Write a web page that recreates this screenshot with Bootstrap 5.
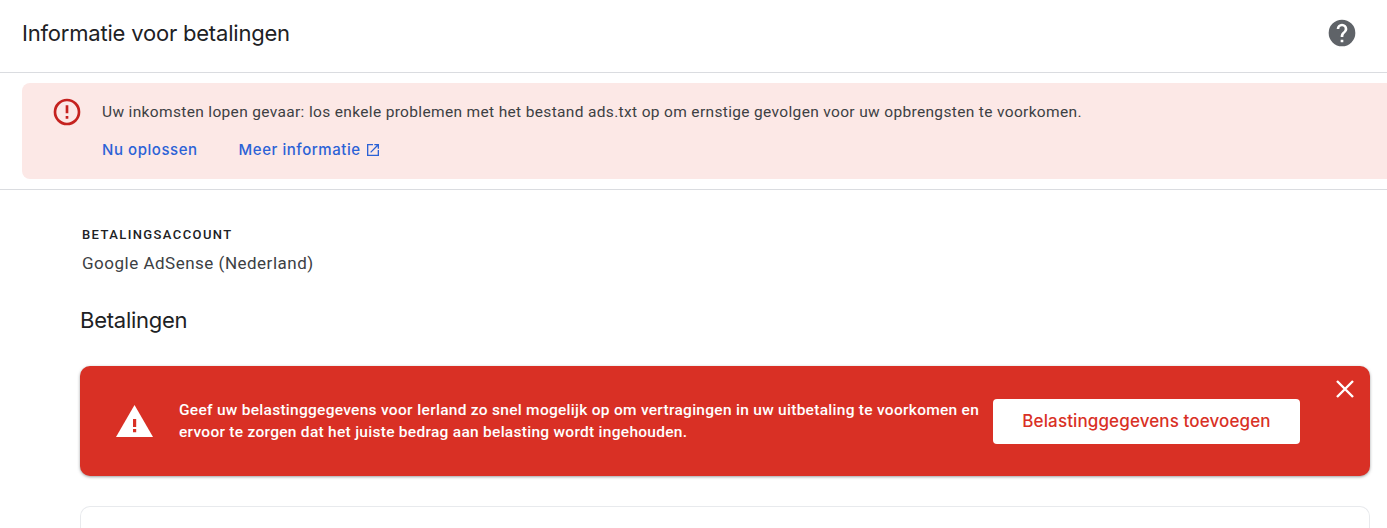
<!DOCTYPE html>
<html lang="nl">
<head>
<meta charset="utf-8">
<title>Informatie voor betalingen</title>
<link href="https://cdn.jsdelivr.net/npm/bootstrap@5.3.0/dist/css/bootstrap.min.css" rel="stylesheet">
<style>
html,body{height:528px;overflow:hidden;background:#fff}
body{font-family:Roboto,"Liberation Sans",sans-serif;color:#3c4043}
.page-head{height:73px;border-bottom:1px solid #dadce0;padding:0 29px 5px 22px}
.page-title{font-family:Inter,"Open Sans",sans-serif;font-size:22px;font-weight:400;color:#202124;margin:0;letter-spacing:-.2px}
.help-icon{margin-bottom:1px}
.warn-wrap{height:117px;padding:10px 0 10px 22px;border-bottom:1px solid #dadce0}
.warn-box{background:#fce8e6;border-radius:8px 0 0 8px;height:96px;padding:17px 0 0 29px}
.warn-icon{margin-top:-4px}
.warn-text{font-size:15.5px;line-height:24px;color:#3c4043;letter-spacing:.34px;margin-left:19px;white-space:nowrap}
.warn-links{margin-left:19px;margin-top:14px;gap:41px}
.warn-link{font-family:Inter,sans-serif;font-size:15px;font-weight:500;color:#2b62d6;text-decoration:none;line-height:24px;letter-spacing:.55px}
.content-area{padding:35px 17px 0 80px}
.acct-label{font-size:13px;font-weight:500;letter-spacing:1.4px;color:#202124;line-height:20px;margin-left:2px}
.acct-name{font-size:17px;line-height:24px;color:#3c4043;margin:6px 0 0 2px;letter-spacing:.5px}
.sect-title{font-family:Inter,sans-serif;font-size:22px;font-weight:400;color:#202124;line-height:28px;margin:0;margin-top:31px;letter-spacing:-.25px}
.tax-banner{background:#d93025;border-radius:10px;height:110px;margin-top:32px;box-shadow:0 1px 3px rgba(60,64,67,.5);padding-left:36px}
.tax-text{font-size:15.5px;font-weight:500;line-height:22px;color:#fff;width:814px;margin-left:26px;letter-spacing:.28px}
.tax-btn{font-family:Inter,sans-serif;background:#fff;color:#d93025;width:307px;height:45px;font-size:17px;font-weight:500;border-radius:4px;border:0;letter-spacing:.12px;padding:2px 0 0}
.tax-btn:hover{background:#fff;color:#d93025}
.tax-close{position:absolute;top:13px;right:15px;background:none;border:0;padding:0;line-height:0}
.lower-card{height:22px;margin-top:30px;border:1px solid #e8eaed;border-bottom:0;border-radius:10px 10px 0 0}
</style>
</head>
<body>
<header class="page-head d-flex align-items-center justify-content-between">
  <h1 class="page-title">Informatie voor betalingen</h1>
  <svg class="help-icon" width="32" height="32" viewBox="0 0 24 24" aria-label="Help"><path fill="#5f6368" d="M12 2a10 10 0 1 0 0 20 10 10 0 0 0 0-20zm1 17h-2v-2h2v2zm2.07-7.750-.9.920C13.450 12.900 13 13.500 13 15h-2v-.5c0-1.100.450-2.100 1.170-2.830l1.240-1.260c.370-.360.590-.860.590-1.410a2 2 0 1 0-4 0H8a4 4 0 1 1 8 0c0 .880-.360 1.680-.930 2.250z"/></svg>
</header>
<section class="warn-wrap">
  <div class="warn-box d-flex">
    <svg class="flex-shrink-0 warn-icon" width="32" height="32" viewBox="0 0 24 24"><path fill="#c5221f" d="M11 15h2v2h-2zm0-8h2v6h-2zm1-5a10 10 0 1 0 0 20 10 10 0 0 0 0-20zm0 18a8 8 0 1 1 0-16 8 8 0 0 1 0 16z"/></svg>
    <div>
      <div class="warn-text">Uw inkomsten lopen gevaar: los enkele problemen met het bestand ads.txt op om ernstige gevolgen voor uw opbrengsten te voorkomen.</div>
      <div class="warn-links d-flex">
        <a class="warn-link" href="#">Nu oplossen</a>
        <a class="warn-link d-flex align-items-center gap-1" href="#">Meer informatie
          <svg width="16" height="16" viewBox="0 0 24 24"><path fill="#2b62d6" d="M19 19H5V5h7V3H3v18h18v-9h-2v7zM14 3v2h3.590l-9.830 9.830 1.410 1.410L19 6.410V10h2V3h-7z"/></svg>
        </a>
      </div>
    </div>
  </div>
</section>
<main class="content-area">
  <div class="acct-label text-uppercase">Betalingsaccount</div>
  <p class="acct-name">Google AdSense (Nederland)</p>
  <h2 class="sect-title">Betalingen</h2>
  <div class="tax-banner d-flex align-items-center position-relative">
    <svg class="flex-shrink-0" width="37" height="32" viewBox="0 0 37 32"><path fill="#fff" d="M18.500 0 37 32H0z"/><path fill="#d93025" d="M17 14h3.200v8H17zm0 10h3.200v3.200H17z"/></svg>
    <div class="tax-text">Geef uw belastinggegevens voor Ierland zo snel mogelijk op om vertragingen in uw uitbetaling te voorkomen en ervoor te zorgen dat het juiste bedrag aan belasting wordt ingehouden.</div>
    <button class="btn tax-btn" type="button">Belastinggegevens toevoegen</button>
    <button class="tax-close" type="button" aria-label="Sluiten"><svg width="20" height="20" viewBox="0 0 20 20"><path stroke="#fff" stroke-width="2.400" d="M2 2l16 16M18 2 2 18"/></svg></button>
  </div>
  <div class="lower-card"></div>
</main>
</body>
</html>
